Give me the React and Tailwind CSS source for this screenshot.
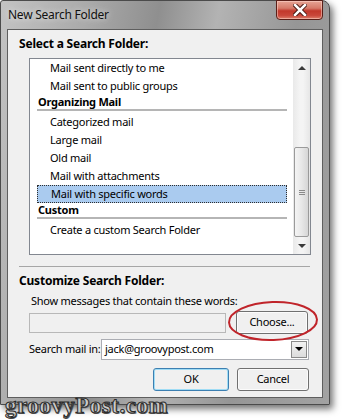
import React from "react";

const font = "font-['Noto_Sans',sans-serif] text-[11px] tracking-[-0.25px] text-black";

function Item({ label, selected }) {
  return (
    <div
      className={
        "h-[18px] flex items-center pl-[13px] " +
        (selected
          ? "bg-[#aacbef] border border-dotted border-[#2e2e2e] pl-[12px]"
          : "")
      }
    >
      {label}
    </div>
  );
}

function Group({ label }) {
  return (
    <div className="mb-[2px]">
      <div className="h-[14px] flex items-center pl-px font-bold">{label}</div>
      <div className="h-[2px] bg-[#b5b5b5]" />
    </div>
  );
}

function ScrollBar() {
  return (
    <div className="w-[17px] flex flex-col bg-[linear-gradient(90deg,#e9e9e9,#f4f4f4_40%,#f4f4f4_60%,#e6e6e6)]">
      <div className="h-[17px] flex items-center justify-center">
        <div className="w-0 h-0 border-x-[4px] border-x-transparent border-b-[4px] border-b-[#3a3a3a]" />
      </div>
      <div className="flex-1 flex flex-col justify-end px-px">
        <div className="h-[90px] rounded-[2px] border border-[#9a9a9a] bg-[linear-gradient(90deg,#f4f4f4,#e8e8e8_50%,#d6d6d6)] flex items-center justify-center">
          <div className="flex flex-col gap-[1px]">
            <div className="w-[6px] h-px bg-[#8a8a8a]" />
            <div className="w-[6px] h-px bg-[#8a8a8a]" />
            <div className="w-[6px] h-px bg-[#8a8a8a]" />
          </div>
        </div>
      </div>
      <div className="h-[17px] flex items-center justify-center">
        <div className="w-0 h-0 border-x-[4px] border-x-transparent border-t-[4px] border-t-[#3a3a3a]" />
      </div>
    </div>
  );
}

function Button({ children, primary, className = "" }) {
  return (
    <div
      className={
        "h-[23px] flex items-center justify-center rounded-[3px] border " +
        (primary
          ? "border-[#3c7fb1] shadow-[inset_0_0_0_1px_#9fdcf5] "
          : "border-[#707070] shadow-[inset_0_0_0_1px_#fbfbfb] ") +
        "bg-[linear-gradient(180deg,#f2f2f2_0%,#ebebeb_48%,#dddddd_52%,#cfcfcf_100%) " +
        className
      }
    >
      {children}
    </div>
  );
}

export default function App() {
  return (
    <div className={"relative w-[344px] h-[419px] bg-white overflow-hidden " + font}>
      <div className="w-[330px] h-[405px] rounded-tr-[8px] rounded-tl-[3px] border border-[#4b4b4b] bg-[linear-gradient(100deg,#c3c3c3_0%,#aaaaaa_22%,#8f8f8f_40%,#b3b3b3_55%,#969696_75%,#a2a2a2_100%)] shadow-[3px_4px_7px_rgba(0,0,0,0.55)] flex flex-col">
        {/* title bar */}
        <div className="relative h-[28px] flex items-center pl-[7px] text-[12px] text-[#111] [text-shadow:0_0_6px_rgba(255,255,255,0.8)]">
          New Search Folder
          <div className="absolute right-[6px] top-[-1px] w-[47px] h-[20px] rounded-b-[4px] border border-[#5a1f18] bg-[linear-gradient(180deg,#e7a495_0%,#d67a69_40%,#c2382b_55%,#c9473a_80%,#dd7f6c_100%)] shadow-[inset_0_0_0_1px_rgba(255,220,210,0.5)] flex items-center justify-center">
            <svg width="14" height="12" viewBox="0 0 14 12">
              <path
                d="M2 1 L12 11 M12 1 L2 11"
                stroke="#4a1a14"
                strokeWidth="4.5"
                strokeLinecap="square"
              />
              <path
                d="M2 1 L12 11 M12 1 L2 11"
                stroke="#ffffff"
                strokeWidth="2.5"
                strokeLinecap="square"
              />
            </svg>
          </div>
        </div>

        {/* client area */}
        <div className="mx-[6px] h-[369px] bg-[#f0f0f0] border border-[#5e5e5e] flex flex-col">
          <div className="mt-[6px] ml-[11px] h-[16px] flex items-center font-bold text-[12px] tracking-[-0.2px]">
            Select a Search Folder:
          </div>

          <div className="mt-[6px] ml-[21px] w-[282px] h-[197px] border border-[#828790] bg-white flex">
            <div className="flex-1 pl-[7px] pr-[6px]">
              <Item label="Mail sent directly to me" />
              <Item label="Mail sent to public groups" />
              <Group label="Organizing Mail" />
              <Item label="Categorized mail" />
              <Item label="Large mail" />
              <Item label="Old mail" />
              <Item label="Mail with attachments" />
              <Item label="Mail with specific words" selected />
              <Group label="Custom" />
              <Item label="Create a custom Search Folder" />
            </div>
            <ScrollBar />
          </div>

          <div className="mt-[11px] ml-[11px] w-[291px] h-px bg-[#a6a6a6]" />

          <div className="mt-[6px] ml-[11px] h-[16px] flex items-center font-bold text-[12px] tracking-[-0.2px]">
            Customize Search Folder:
          </div>

          <div className="mt-[4px] ml-[23px] h-[16px] flex items-center">
            Show messages that contain these words:
          </div>

          <div className="mt-[2px] ml-[21px] flex items-center h-[23px]">
            <div className="w-[197px] h-[20px] border border-[#b8b8b8] bg-[#f0f0f0]" />
            <Button className="ml-[10px] w-[72px]">Choose...</Button>
          </div>

          <div className="mt-[4px] ml-[21px] flex items-center h-[22px]">
            <div className="w-[72px]">Search mail in:</div>
            <div className="w-[208px] h-[21px] border border-[#abadb3] bg-white flex items-center">
              <div className="flex-1 pl-[3px]">jack@groovypost.com</div>
              <div className="w-[16px] h-[17px] mr-px border border-[#8a8a8a] bg-[linear-gradient(180deg,#f2f2f2,#dcdcdc)] flex items-center justify-center">
                <div className="w-0 h-0 border-x-[4px] border-x-transparent border-t-[4px] border-t-black" />
              </div>
            </div>
          </div>

          <div className="mt-[8px] ml-[145px] flex gap-[8px]">
            <Button primary className="w-[76px]">OK</Button>
            <Button className="w-[72px]">Cancel</Button>
          </div>
        </div>
      </div>

      {/* red highlight around Choose */}
      <svg
        className="absolute left-[225px] top-[297px]"
        width="96"
        height="48"
        viewBox="0 0 96 48"
      >
        <ellipse
          cx="48"
          cy="24"
          rx="44"
          ry="19"
          transform="rotate(-2 48 24)"
          fill="none"
          stroke="#c0242a"
          strokeWidth="2"
        />
      </svg>

      {/* watermark */}
      <div className="absolute left-[5px] top-[389px] font-['Liberation_Serif',serif] font-bold text-[23px] tracking-[0.5px] text-[#c9c9c9] [-webkit-text-stroke:1px_#2b2b2b] [text-shadow:1px_1px_0_#6b6b6b]">
        groovyPost.com
      </div>
    </div>
  );
}
